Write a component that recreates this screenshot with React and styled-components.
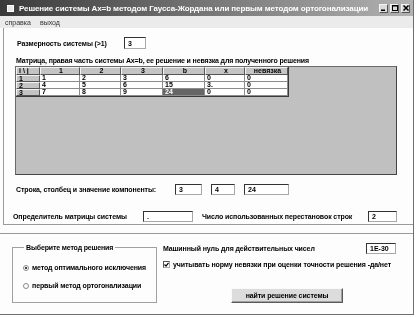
import React from "react";
import styled, { createGlobalStyle } from "styled-components";

const GlobalStyle = createGlobalStyle`
    html, body {
        margin: 0;
        padding: 0;
        background: #ffffff;
    }
    body {
        font-family: "Liberation Sans", Arial, sans-serif;
        color: #000;
    }
`;

const Window = styled.div`
    width: 414px;
    height: 315px;
    box-sizing: border-box;
    border-right: 1px solid #6e6e6e;
    border-bottom: 1px solid #6e6e6e;
    background: #fdfdfd;
    display: flex;
    flex-direction: column;
    overflow: hidden;
    filter: grayscale(1);
`;

const TitleBar = styled.div`
    height: 16px;
    flex: none;
    display: flex;
    align-items: center;
    padding: 0 3px 0 7px;
    background: linear-gradient(to right, #3a3a3a, #b2b2b2);
    color: #fff;
    font-size: 8px;
    font-weight: bold;
    letter-spacing: -0.1px;
`;

const TitleIcon = styled.span`
    width: 5px;
    height: 5px;
    background: #e8e8e8;
    border: 1px solid #fff;
    margin-right: 5px;
    flex: none;
`;

const TitleText = styled.span`
    flex: 1;
    white-space: nowrap;
    overflow: hidden;
`;

const WinButtons = styled.div`
    display: flex;
    gap: 2px;
`;

const WinButton = styled.div`
    width: 9px;
    height: 9px;
    background: #dadada;
    border: 1px solid #f4f4f4;
    border-right-color: #555;
    border-bottom-color: #555;
    box-sizing: border-box;
    display: flex;
    align-items: center;
    justify-content: center;
`;

const MenuBar = styled.div`
    height: 12px;
    flex: none;
    display: flex;
    align-items: center;
    gap: 9px;
    padding-left: 5px;
    background: #ebebeb;
    font-size: 7px;
    color: #333;
`;

const UpperPanel = styled.div`
    margin-left: 3px;
    height: 197px;
    flex: none;
    box-sizing: border-box;
    border-left: 1px solid #9a9a9a;
    border-bottom: 1px solid #9a9a9a;
    display: flex;
    flex-direction: column;
`;

const Row = styled.div`
    display: flex;
    align-items: center;
    margin-top: ${(p) => p.top}px;
    padding-left: ${(p) => p.left}px;
`;

const Label = styled.span`
    font-size: 7px;
    font-weight: bold;
    letter-spacing: -0.1px;
    white-space: nowrap;
    width: ${(p) => (p.w ? p.w + "px" : "auto")};
    margin-left: ${(p) => p.ml || 0}px;
    flex: none;
`;

const Field = styled.div`
    width: ${(p) => p.w}px;
    height: ${(p) => p.h || 11}px;
    margin-left: ${(p) => p.ml || 0}px;
    box-sizing: border-box;
    background: #fff;
    border: 1px solid #333;
    border-right-color: #a8a8a8;
    border-bottom-color: #a8a8a8;
    font-size: 7px;
    font-weight: bold;
    padding-left: 3px;
    display: flex;
    align-items: center;
    flex: none;
`;

const Caption = styled.div`
    margin-top: 8px;
    padding-left: 12px;
    font-size: 7px;
    font-weight: bold;
    letter-spacing: -0.15px;
    line-height: 8px;
    white-space: nowrap;
`;

const GridBox = styled.div`
    margin: 1px 0 0 11px;
    width: 382px;
    height: 109px;
    box-sizing: border-box;
    background: #c0c0c0;
    border: 1px solid #6a6a6a;
    border-right-color: #444;
    border-bottom-color: #444;
`;

const Table = styled.div`
    display: grid;
    grid-template-columns: 24px 40px 41px 42px 42px 40px 43px;
    grid-template-rows: 8px 7px 7px 7px;
    width: max-content;
    border-right: 1px solid #3c3c3c;
    border-bottom: 1px solid #3c3c3c;
`;

const Cell = styled.div`
    box-sizing: border-box;
    font-size: 7px;
    font-weight: bold;
    line-height: 6px;
    padding-left: 2px;
    display: flex;
    align-items: center;
    justify-content: ${(p) => (p.center ? "center" : "flex-start")};
    background: ${(p) => (p.selected ? "#666" : p.fixed ? "#c4c4c4" : "#fff")};
    color: ${(p) => (p.selected ? "#fff" : "#000")};
    border-right: 1px solid ${(p) => (p.fixed ? "#555" : "#8c8c8c")};
    border-bottom: 1px solid ${(p) => (p.fixed ? "#555" : "#8c8c8c")};
    ${(p) => (p.fixed ? "border-top: 1px solid #f2f2f2; border-left: 1px solid #f2f2f2;" : "")}
    overflow: hidden;
    white-space: nowrap;
`;

const LowerPanel = styled.div`
    margin-top: 8px;
    flex: 1;
    border-top: 1px solid #9a9a9a;
    display: flex;
    align-items: flex-start;
`;

const GroupBox = styled.fieldset`
    margin: 10px 0 0 12px;
    padding: 0 0 0 10px;
    width: 145px;
    height: 59px;
    box-sizing: border-box;
    border: 1px solid #a0a0a0;
    display: flex;
    flex-direction: column;
    gap: 11px;
`;

const Legend = styled.legend`
    padding: 0 2px;
    margin-left: 1px;
    font-size: 7px;
    font-weight: bold;
    letter-spacing: -0.15px;
`;

const Option = styled.div`
    display: flex;
    align-items: center;
    gap: 3px;
    font-size: 7px;
    font-weight: bold;
    letter-spacing: -0.1px;
    white-space: nowrap;
    margin-top: ${(p) => p.top || 0}px;
`;

const Radio = styled.span`
    width: 6px;
    height: 6px;
    box-sizing: border-box;
    border-radius: 50%;
    border: 1px solid #8a8a8a;
    background: #fff;
    display: flex;
    align-items: center;
    justify-content: center;
    flex: none;

    &::after {
        content: "";
        width: 2px;
        height: 2px;
        border-radius: 50%;
        background: ${(p) => (p.checked ? "#000" : "transparent")};
    }
`;

const CheckBox = styled.span`
    width: 7px;
    height: 7px;
    box-sizing: border-box;
    border: 1px solid #555;
    border-right-color: #aaa;
    border-bottom-color: #aaa;
    background: #fff;
    flex: none;
    display: flex;
`;

const RightCol = styled.div`
    margin: 9px 0 0 6px;
    display: flex;
    flex-direction: column;
`;

const Button = styled.div`
    margin: 20px 0 0 68px;
    width: 112px;
    height: 15px;
    box-sizing: border-box;
    background: #dcdcdc;
    border: 1px solid #fafafa;
    border-right-color: #5a5a5a;
    border-bottom-color: #5a5a5a;
    box-shadow: inset -1px -1px 0 #a0a0a0;
    display: flex;
    align-items: center;
    justify-content: center;
    font-size: 7px;
    font-weight: bold;
    letter-spacing: -0.1px;
`;

const header = ["i \\ j", "1", "2", "3", "b", "x", "невязка"];
const rows = [
    ["1", "1", "2", "3", "6", "0", "0"],
    ["2", "4", "5", "6", "15", "3.", "0"],
    ["3", "7", "8", "9", "24", "0", "0"],
];

const App = () => {
    return (
        <Window>
            <GlobalStyle />
            <TitleBar>
                <TitleIcon />
                <TitleText>
                    Решение системы Ax=b методом Гаусса-Жордана или первым методом ортогонализации
                </TitleText>
                <WinButtons>
                    <WinButton>
                        <svg width="5" height="5" viewBox="0 0 5 5">
                            <rect x="0" y="3.5" width="4" height="1.5" fill="#000" />
                        </svg>
                    </WinButton>
                    <WinButton>
                        <svg width="6" height="6" viewBox="0 0 6 6">
                            <rect x="0.5" y="0.5" width="5" height="5" fill="none" stroke="#000" />
                            <rect x="0" y="0" width="6" height="1.5" fill="#000" />
                        </svg>
                    </WinButton>
                    <WinButton>
                        <svg width="6" height="6" viewBox="0 0 6 6">
                            <path d="M0.5 0.5 L5.5 5.5 M5.5 0.5 L0.5 5.5" stroke="#000" strokeWidth="1.5" />
                        </svg>
                    </WinButton>
                </WinButtons>
            </TitleBar>
            <MenuBar>
                <span>справка</span>
                <span>выход</span>
            </MenuBar>
            <UpperPanel>
                <Row top={9} left={13}>
                    <Label w={107}>Размерность системы (&gt;1)</Label>
                    <Field w={22} h={12}>3</Field>
                </Row>
                <Caption>
                    Матрица, правая часть системы Ax=b, ее решение и невязка для полученного решения
                </Caption>
                <GridBox>
                    <Table>
                        {header.map((h, i) => (
                            <Cell key={"h" + i} fixed center={i > 0}>
                                {h}
                            </Cell>
                        ))}
                        {rows.map((r, ri) =>
                            r.map((v, ci) => (
                                <Cell
                                    key={ri + "-" + ci}
                                    fixed={ci === 0}
                                    selected={ri === 2 && ci === 4}
                                >
                                    {v}
                                </Cell>
                            ))
                        )}
                    </Table>
                </GridBox>
                <Row top={9} left={12}>
                    <Label w={159}>Строка, столбец и значение компоненты:</Label>
                    <Field w={27}>3</Field>
                    <Field w={24} ml={9}>4</Field>
                    <Field w={45} ml={9}>24</Field>
                </Row>
                <Row top={16} left={9}>
                    <Label w={130}>Определитель матрицы системы</Label>
                    <Field w={50}>.</Field>
                    <Label ml={9} w={166}>Число использованных перестановок строк</Label>
                    <Field w={29}>2</Field>
                </Row>
            </UpperPanel>
            <LowerPanel>
                <GroupBox>
                    <Legend>Выберите метод решения</Legend>
                    <Option top={13}>
                        <Radio checked />
                        метод оптимального исключения
                    </Option>
                    <Option>
                        <Radio />
                        первый метод ортогонализации
                    </Option>
                </GroupBox>
                <RightCol>
                    <Row top={0} left={0}>
                        <Label w={203}>Машинный нуль для действительных чисел</Label>
                        <Field w={30}>1E-30</Field>
                    </Row>
                    <Option top={7}>
                        <CheckBox>
                            <svg width="5" height="5" viewBox="0 0 5 5">
                                <path d="M0.5 2.5 L2 4 L4.5 0.8" stroke="#000" strokeWidth="1.2" fill="none" />
                            </svg>
                        </CheckBox>
                        учитывать норму невязки при оценки точности решения -да/нет
                    </Option>
                    <Button>найти решение системы</Button>
                </RightCol>
            </LowerPanel>
        </Window>
    );
};

export default App;
